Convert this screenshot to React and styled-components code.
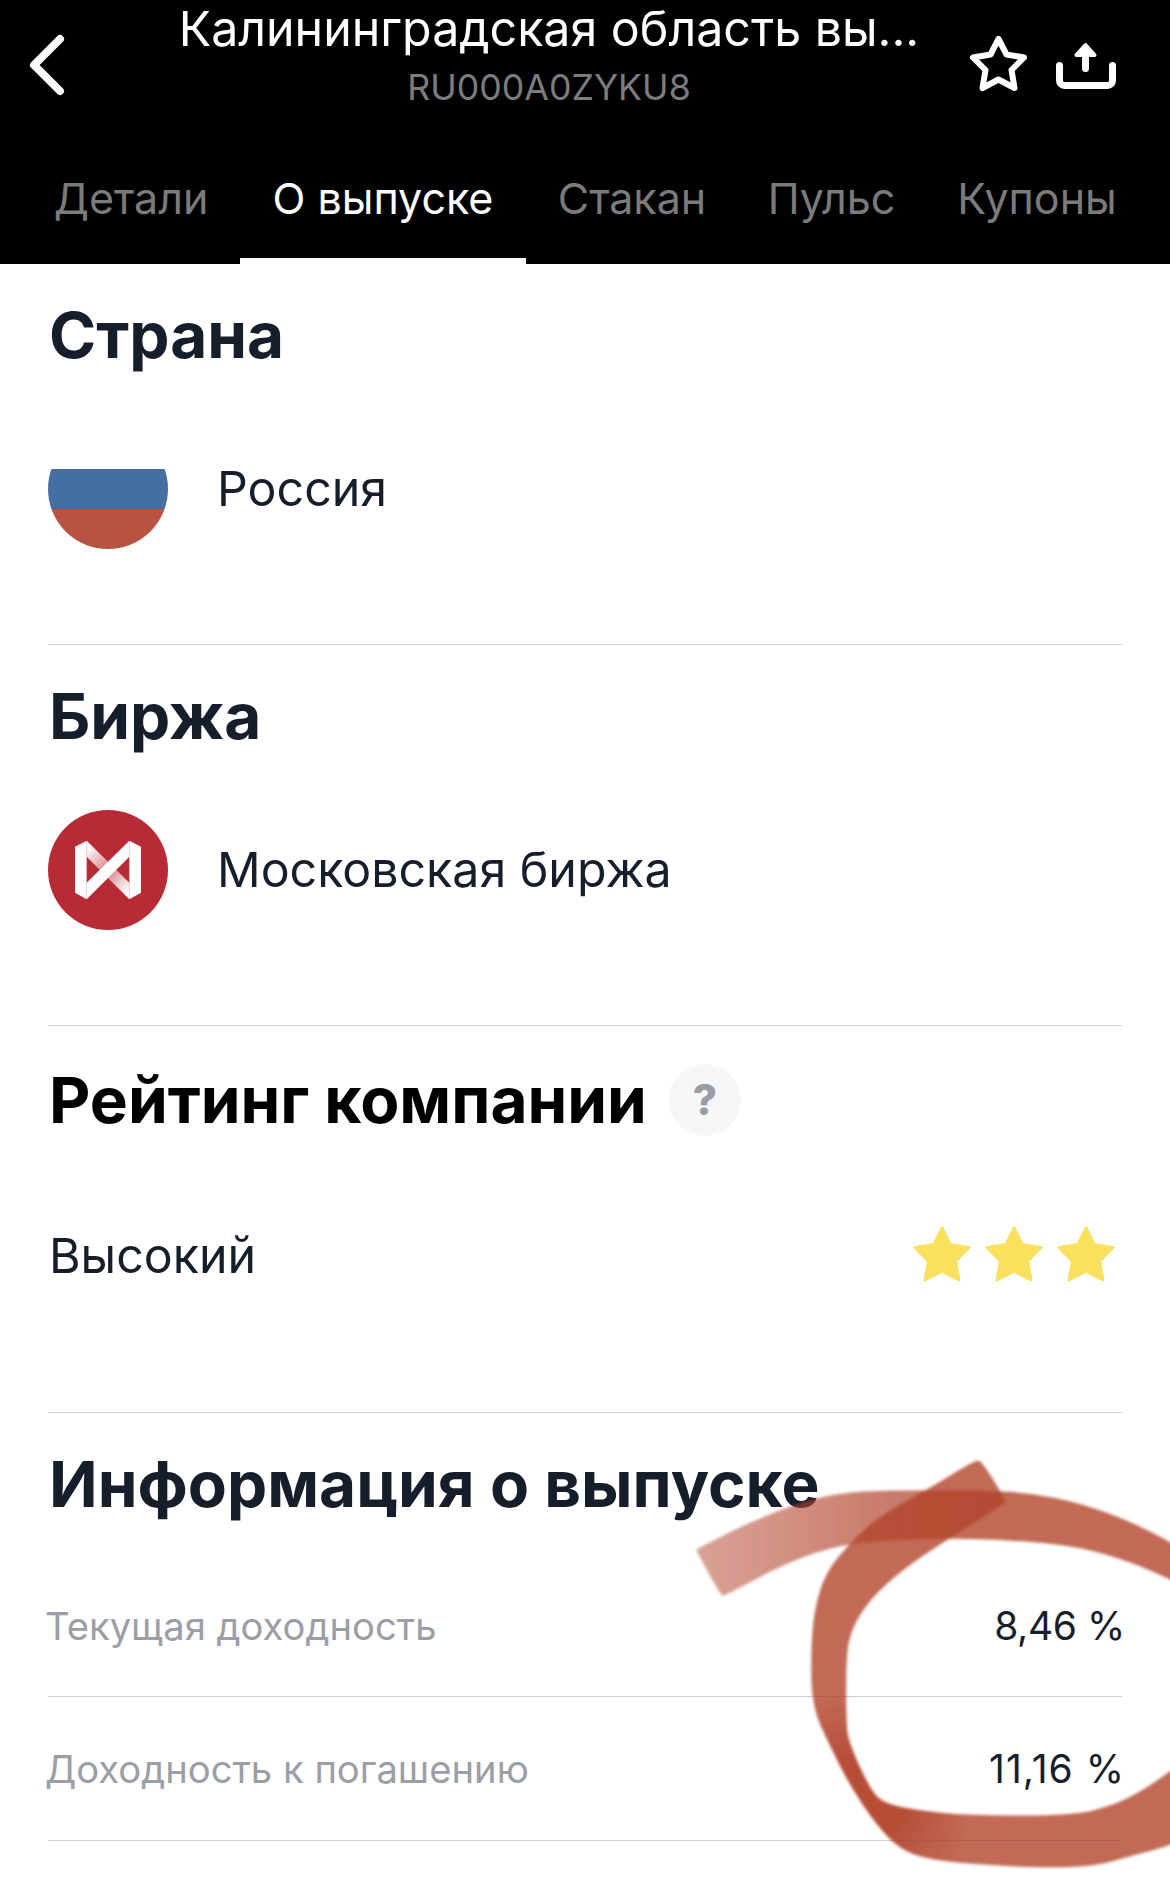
import React from 'react';
import styled, { createGlobalStyle } from 'styled-components';

const GlobalStyle = createGlobalStyle`
  html, body {
    margin: 0;
    padding: 0;
    background: #fff;
    font-family: Inter, "Liberation Sans", sans-serif;
  }
`;

const Page = styled.div`
  position: relative;
  width: 1170px;
  height: 1891px;
  overflow: hidden;
  background: #fff;
`;

const Header = styled.header`
  height: 264px;
  background: #000;
  display: flex;
  flex-direction: column;
`;

const TopBar = styled.div`
  height: 136px;
  display: flex;
  padding: 0 54px 0 28px;
`;

const BackIcon = styled.svg`
  width: 38px;
  height: 64px;
  margin-top: 33px;
  flex: none;
`;

const TitleBlock = styled.div`
  flex: 1;
  min-width: 0;
  text-align: center;
  padding-left: 62px;
`;

const Title = styled.div`
  color: #fff;
  font-size: 48.3px;
  line-height: 58px;
  white-space: nowrap;
`;

const Isin = styled.div`
  margin-top: 7px;
  color: #7c7c7c;
  font-size: 35.7px;
  line-height: 44px;
`;

const Actions = styled.div`
  display: flex;
  gap: 26px;
  padding-top: 33px;
`;

const Tabs = styled.nav`
  display: flex;
  height: 128px;
`;

const Tab = styled.div`
  width: ${(p) => p.$width}px;
  box-sizing: border-box;
  height: 128px;
  padding: 36px 0 0 ${(p) => p.$indent || 0}px;
  text-align: center;
  font-size: 43px;
  line-height: 52px;
  color: ${(p) => (p.$active ? '#fff' : '#7b7b7b')};
  border-bottom: 6px solid ${(p) => (p.$active ? '#fff' : 'transparent')};
`;

const Section = styled.section`
  margin: 0 48px;
  height: ${(p) => p.$height}px;
  box-sizing: border-box;
  border-bottom: 1px solid #ccced2;
`;

const Heading = styled.h2`
  margin: 0;
  padding: ${(p) => p.$top}px 0 0 1px;
  font-size: 63.9px;
  line-height: 74px;
  font-weight: 700;
  color: ${(p) => p.$color || '#161e2c'};
  display: flex;
  align-items: center;
  gap: 22px;
`;

const Hint = styled.span`
  width: 72px;
  height: 72px;
  border-radius: 50%;
  background: #f5f6f7;
  color: #9b9ca3;
  font-size: 42px;
  font-weight: 800;
  display: flex;
  align-items: center;
  justify-content: center;
`;

const ItemRow = styled.div`
  display: flex;
  align-items: center;
  gap: 49px;
  margin-top: 57px;
  height: 120px;
`;

const ItemText = styled.span`
  font-size: 48.3px;
  line-height: 58px;
  color: #161e2c;
`;

const FlagBox = styled.div`
  width: 120px;
  height: 120px;
  flex: none;
  border-radius: 50%;
  background: linear-gradient(
    to bottom,
    #fff 0 40px,
    #456ea3 40px 80px,
    #b75340 80px 120px
  );
`;

const LogoIcon = styled.svg`
  width: 120px;
  height: 120px;
  flex: none;
`;

const RatingRow = styled.div`
  display: flex;
  align-items: center;
  justify-content: space-between;
  margin-top: 90px;
  padding: 0 7px 0 1px;
`;

const Stars = styled.div`
  display: flex;
  gap: 14px;
  margin-top: -4px;
`;

const InfoBlock = styled.section`
  margin: 0 48px;
`;

const DataRow = styled.div`
  height: ${(p) => p.$height}px;
  box-sizing: border-box;
  border-bottom: 1px solid #ccced2;
  display: flex;
  align-items: center;
  justify-content: space-between;
  padding-top: ${(p) => p.$top || 0}px;
`;

const Label = styled.span`
  margin-left: -3px;
  font-size: 38.2px;
  color: #9b9ea6;
`;

const Value = styled.span`
  margin-right: -3px;
  font-size: 39px;
  letter-spacing: ${(p) => p.$spacing}px;
  color: #161e2c;
`;

// the hand-drawn mark over the page
const Scribble = styled.svg`
  position: absolute;
  left: 0;
  top: 0;
  pointer-events: none;
`;

const firstStroke = [
  [165, 385], [170, 380], [350, 290], [540, 222], [700, 208], [1000, 208], [1150, 215],
  [1300, 245], [1450, 300], [1568, 360], [1700, 440], [1700, 540],
  [1568, 470], [1450, 420], [1300, 375], [1100, 355], [900, 350], [650, 360],
  [520, 390], [400, 440], [250, 520], [240, 520],
];

const secondStroke = [
  [990, 120], [860, 200], [700, 290], [620, 365], [550, 450], [515, 560],
  [505, 700], [510, 850], [560, 960], [620, 1080], [700, 1200], [770, 1270],
  [850, 1300], [1000, 1315], [1200, 1325], [1350, 1320], [1450, 1290],
  [1568, 1260], [1700, 1200], [1700, 950], [1568, 1040], [1480, 1100],
  [1400, 1140], [1280, 1170], [1000, 1170], [850, 1160], [720, 1135],
  [680, 1090], [620, 960], [610, 900], [610, 700], [625, 620], [680, 530],
  [780, 440], [900, 360], [1078, 248], [1084, 240], [1010, 120],
];

// closed outline rounded through the midpoints of its sides
const smooth = (points) => {
  const mid = (a, b) => [(a[0] + b[0]) / 2, (a[1] + b[1]) / 2];
  const start = mid(points[points.length - 1], points[0]);
  let d = `M${start[0]} ${start[1]}`;
  points.forEach((point, i) => {
    const end = mid(point, points[(i + 1) % points.length]);
    d += ` Q${point[0]} ${point[1]} ${end[0]} ${end[1]}`;
  });
  return `${d} Z`;
};

const Star = () => (
  <svg width="58" height="56" viewBox="0 0 58 56">
    <path
      d="M29 2 L37 18.5 L56 21.5 L42.5 35 L46 54 L29 45 L12 54 L15.5 35 L2 21.5 L21 18.5 Z"
      fill="#f9e05d"
      stroke="#f9e05d"
      strokeWidth="3"
      strokeLinejoin="round"
    />
  </svg>
);

const App = () => (
  <>
    <GlobalStyle />
    <Page>
      <Header>
        <TopBar>
          <BackIcon viewBox="0 0 38 64">
            <path d="M32 6 L6 32 L32 58" fill="none" stroke="#fff" strokeWidth="8" strokeLinecap="round" strokeLinejoin="round" />
          </BackIcon>
          <TitleBlock>
            <Title>Калининградская область вы...</Title>
            <Isin>RU000A0ZYKU8</Isin>
          </TitleBlock>
          <Actions>
            <svg width="60" height="60" viewBox="0 0 60 60">
              <path d="M28.5 6 L36.5 21.5 L54 24.5 L41.5 37 L44.5 55 L28.5 46.5 L12.5 55 L15.5 37 L3 24.5 L20.5 21.5 Z" fill="none" stroke="#fff" strokeWidth="6" strokeLinejoin="round" />
            </svg>
            <svg width="60" height="60" viewBox="0 0 60 60">
              <path d="M3.5 32.5 V47.5 a5 5 0 0 0 5 5 H51.5 a5 5 0 0 0 5 -5 V32.5" fill="none" stroke="#fff" strokeWidth="7" strokeLinecap="round" />
              <path d="M29.5 22 V35.5" fill="none" stroke="#fff" strokeWidth="7" strokeLinecap="round" />
              <path d="M29.5 12 L38.5 22 H20.5 Z" fill="#fff" stroke="#fff" strokeWidth="4" strokeLinejoin="round" />
            </svg>
          </Actions>
        </TopBar>
        <Tabs>
          <Tab $width={240} $indent={22}>Детали</Tab>
          <Tab $width={286} $active>О выпуске</Tab>
          <Tab $width={212}>Стакан</Tab>
          <Tab $width={187}>Пульс</Tab>
          <Tab $width={224}>Купоны</Tab>
        </Tabs>
      </Header>

      <Section $height={381}>
        <Heading $top={34}>Страна</Heading>
        <ItemRow>
          <FlagBox />
          <ItemText>Россия</ItemText>
        </ItemRow>
      </Section>

      <Section $height={381}>
        <Heading $top={34}>Биржа</Heading>
        <ItemRow>
          <LogoIcon viewBox="0 0 120 120">
            <defs>
              <linearGradient id="moexBand" gradientUnits="userSpaceOnUse" x1="80" y1="86" x2="208" y2="213">
                <stop offset="0" stopColor="#fff" />
                <stop offset="0.4" stopColor="#dd9aa0" />
                <stop offset="0.6" stopColor="#dd9aa0" />
                <stop offset="1" stopColor="#fff" />
              </linearGradient>
            </defs>
            <circle cx="60" cy="60" r="60" fill="#b72b37" />
            <g transform="translate(12 10) scale(0.3333)">
              <path d="M80 62 L208 188 V238 L80 110 Z" fill="url(#moexBand)" />
              <path d="M45 80 L80 62 V238 L45 218 Z" fill="#fff" />
              <path d="M208 62 L243 80 V218 L208 238 Z" fill="#fff" />
              <path d="M80 188 L208 62 V110 L80 238 Z" fill="#fff" />
            </g>
          </LogoIcon>
          <ItemText>Московская биржа</ItemText>
        </ItemRow>
      </Section>

      <Section $height={387}>
        <Heading $top={37} $color="#000">
          Рейтинг компании
          <Hint>?</Hint>
        </Heading>
        <RatingRow>
          <ItemText>Высокий</ItemText>
          <Stars>
            <Star />
            <Star />
            <Star />
          </Stars>
        </RatingRow>
      </Section>

      <InfoBlock>
        <Heading $top={34}>Информация о выпуске</Heading>
        <DataRow $height={176} $top={34}>
          <Label>Текущая доходность</Label>
          <Value $spacing={-0.4}>8,46 %</Value>
        </DataRow>
        <DataRow $height={144}>
          <Label>Доходность к погашению</Label>
          <Value $spacing={1}>11,16 %</Value>
        </DataRow>
      </InfoBlock>

      <Scribble width="1170" height="1891" viewBox="0 0 1170 1891">
        <defs>
          <linearGradient id="fade" gradientUnits="userSpaceOnUse" x1="170" y1="0" x2="1000" y2="0">
            <stop offset="0" stopColor="#b2442c" stopOpacity="0.5" />
            <stop offset="1" stopColor="#b2442c" stopOpacity="0.8" />
          </linearGradient>
          <radialGradient id="deep" gradientUnits="userSpaceOnUse" cx="660" cy="1120" r="320">
            <stop offset="0.4" stopColor="#b2442c" stopOpacity="0.95" />
            <stop offset="1" stopColor="#b2442c" stopOpacity="0.8" />
          </radialGradient>
          <filter id="soft">
            <feGaussianBlur stdDeviation="4" />
          </filter>
        </defs>
        <g transform="translate(640 1420) scale(0.338)" filter="url(#soft)">
          <path d={smooth(firstStroke)} fill="url(#fade)" />
          <path d={smooth(secondStroke)} fill="url(#deep)" />
        </g>
      </Scribble>
    </Page>
  </>
);

export default App;
